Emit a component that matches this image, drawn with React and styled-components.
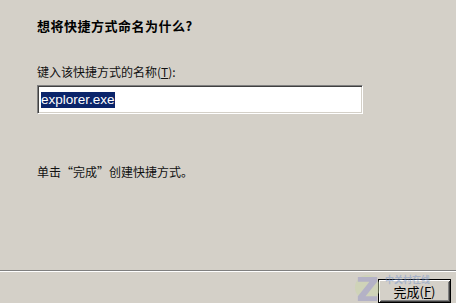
import React from 'react';
import styled, { createGlobalStyle } from 'styled-components';

const GlobalStyle = createGlobalStyle`
    html, body {
        margin: 0;
        padding: 0;
        background: #d4d0c8;
    }
`;

const Dialog = styled.div`
    position: relative;
    display: flex;
    flex-direction: column;
    width: 456px;
    height: 303px;
    overflow: hidden;
    background: #d4d0c8;
    color: #000;
    font-family: 'Liberation Sans', 'Noto Sans CJK SC', sans-serif;
    font-size: 12px;
`;

const Body = styled.div`
    flex: 1;
    display: flex;
    flex-direction: column;
    padding: 18px 0 0 37px;
`;

const Title = styled.h1`
    margin: 0;
    font-family: 'Noto Sans CJK SC', sans-serif;
    font-size: 13px;
    font-weight: 700;
    letter-spacing: 0.5px;
    line-height: 16px;
`;

const Label = styled.div`
    margin-top: 30px;
    font-family: 'Noto Sans CJK SC', sans-serif;
    font-size: 12px;
    line-height: 16px;
    color: #111;

    u {
        text-decoration: underline;
    }
`;

const NameField = styled.div`
    display: flex;
    align-items: center;
    box-sizing: border-box;
    width: 326px;
    height: 29px;
    margin-top: 5px;
    padding: 0 3px;
    background: #fff;
    border-top: 1px solid #808080;
    border-left: 1px solid #808080;
    border-right: 1px solid #fff;
    border-bottom: 1px solid #fff;
    box-shadow: inset 1px 1px 0 #404040, inset -1px -1px 0 #d4d0c8;
`;

const Selected = styled.span`
    background: #0a246a;
    color: #fff;
    font-family: 'Liberation Sans', sans-serif;
    font-size: 13.5px;
    line-height: 15px;
    padding: 0 0 1px;
`;

const Hint = styled.div`
    margin-top: 50px;
    font-family: 'Noto Sans CJK SC', sans-serif;
    font-size: 12px;
    line-height: 16px;
    color: #111;
`;

const Footer = styled.div`
    display: flex;
    justify-content: flex-end;
    padding: 8px 5px 0 0;
    border-top: 1px solid #808080;
    box-shadow: inset 0 1px 0 #fff;
`;

const Button = styled.button`
    box-sizing: border-box;
    width: 73px;
    height: 24px;
    padding: 0;
    background: #d4d0c8;
    border: 1px solid #000;
    box-shadow: inset 1px 1px 0 #fff, inset -1px -1px 0 #404040,
        inset 2px 2px 0 #d4d0c8, inset -2px -2px 0 #808080;
    font-family: 'Noto Sans CJK SC', sans-serif;
    font-size: 13px;
    color: #000;

    u {
        text-decoration: underline;
    }
`;

const Watermark = styled.div`
    position: absolute;
    left: 354px;
    top: 272px;
    display: flex;
    gap: 4px;
    opacity: 0.45;
    pointer-events: none;
`;

const MarkText = styled.span`
    margin-top: 3px;
    font-family: 'Noto Sans CJK SC', sans-serif;
    font-weight: 700;
    font-size: 9px;
    line-height: 10px;
    color: #6f8fc8;
`;

const ZLogo = () => (
    <svg width="27" height="31" viewBox="0 0 28 32">
        <circle cx="14" cy="16" r="13" fill="#c9d7a6" />
        <path d="M4 5 H24 V10 L12 25 H24 V30 H4 V25 L16 10 H4 Z" fill="#8f8fc4" />
    </svg>
);

const App = () => {
    return (
        <Dialog>
            <GlobalStyle />
            <Body>
                <Title>想将快捷方式命名为什么?</Title>
                <Label>
                    键入该快捷方式的名称(<u>T</u>):
                </Label>
                <NameField>
                    <Selected>explorer.exe</Selected>
                </NameField>
                <Hint>单击“完成”创建快捷方式。</Hint>
            </Body>
            <Footer>
                <Button>
                    完成(<u>F</u>)
                </Button>
            </Footer>
            <Watermark>
                <ZLogo />
                <MarkText>中关村在线</MarkText>
            </Watermark>
        </Dialog>
    );
};

export default App;
